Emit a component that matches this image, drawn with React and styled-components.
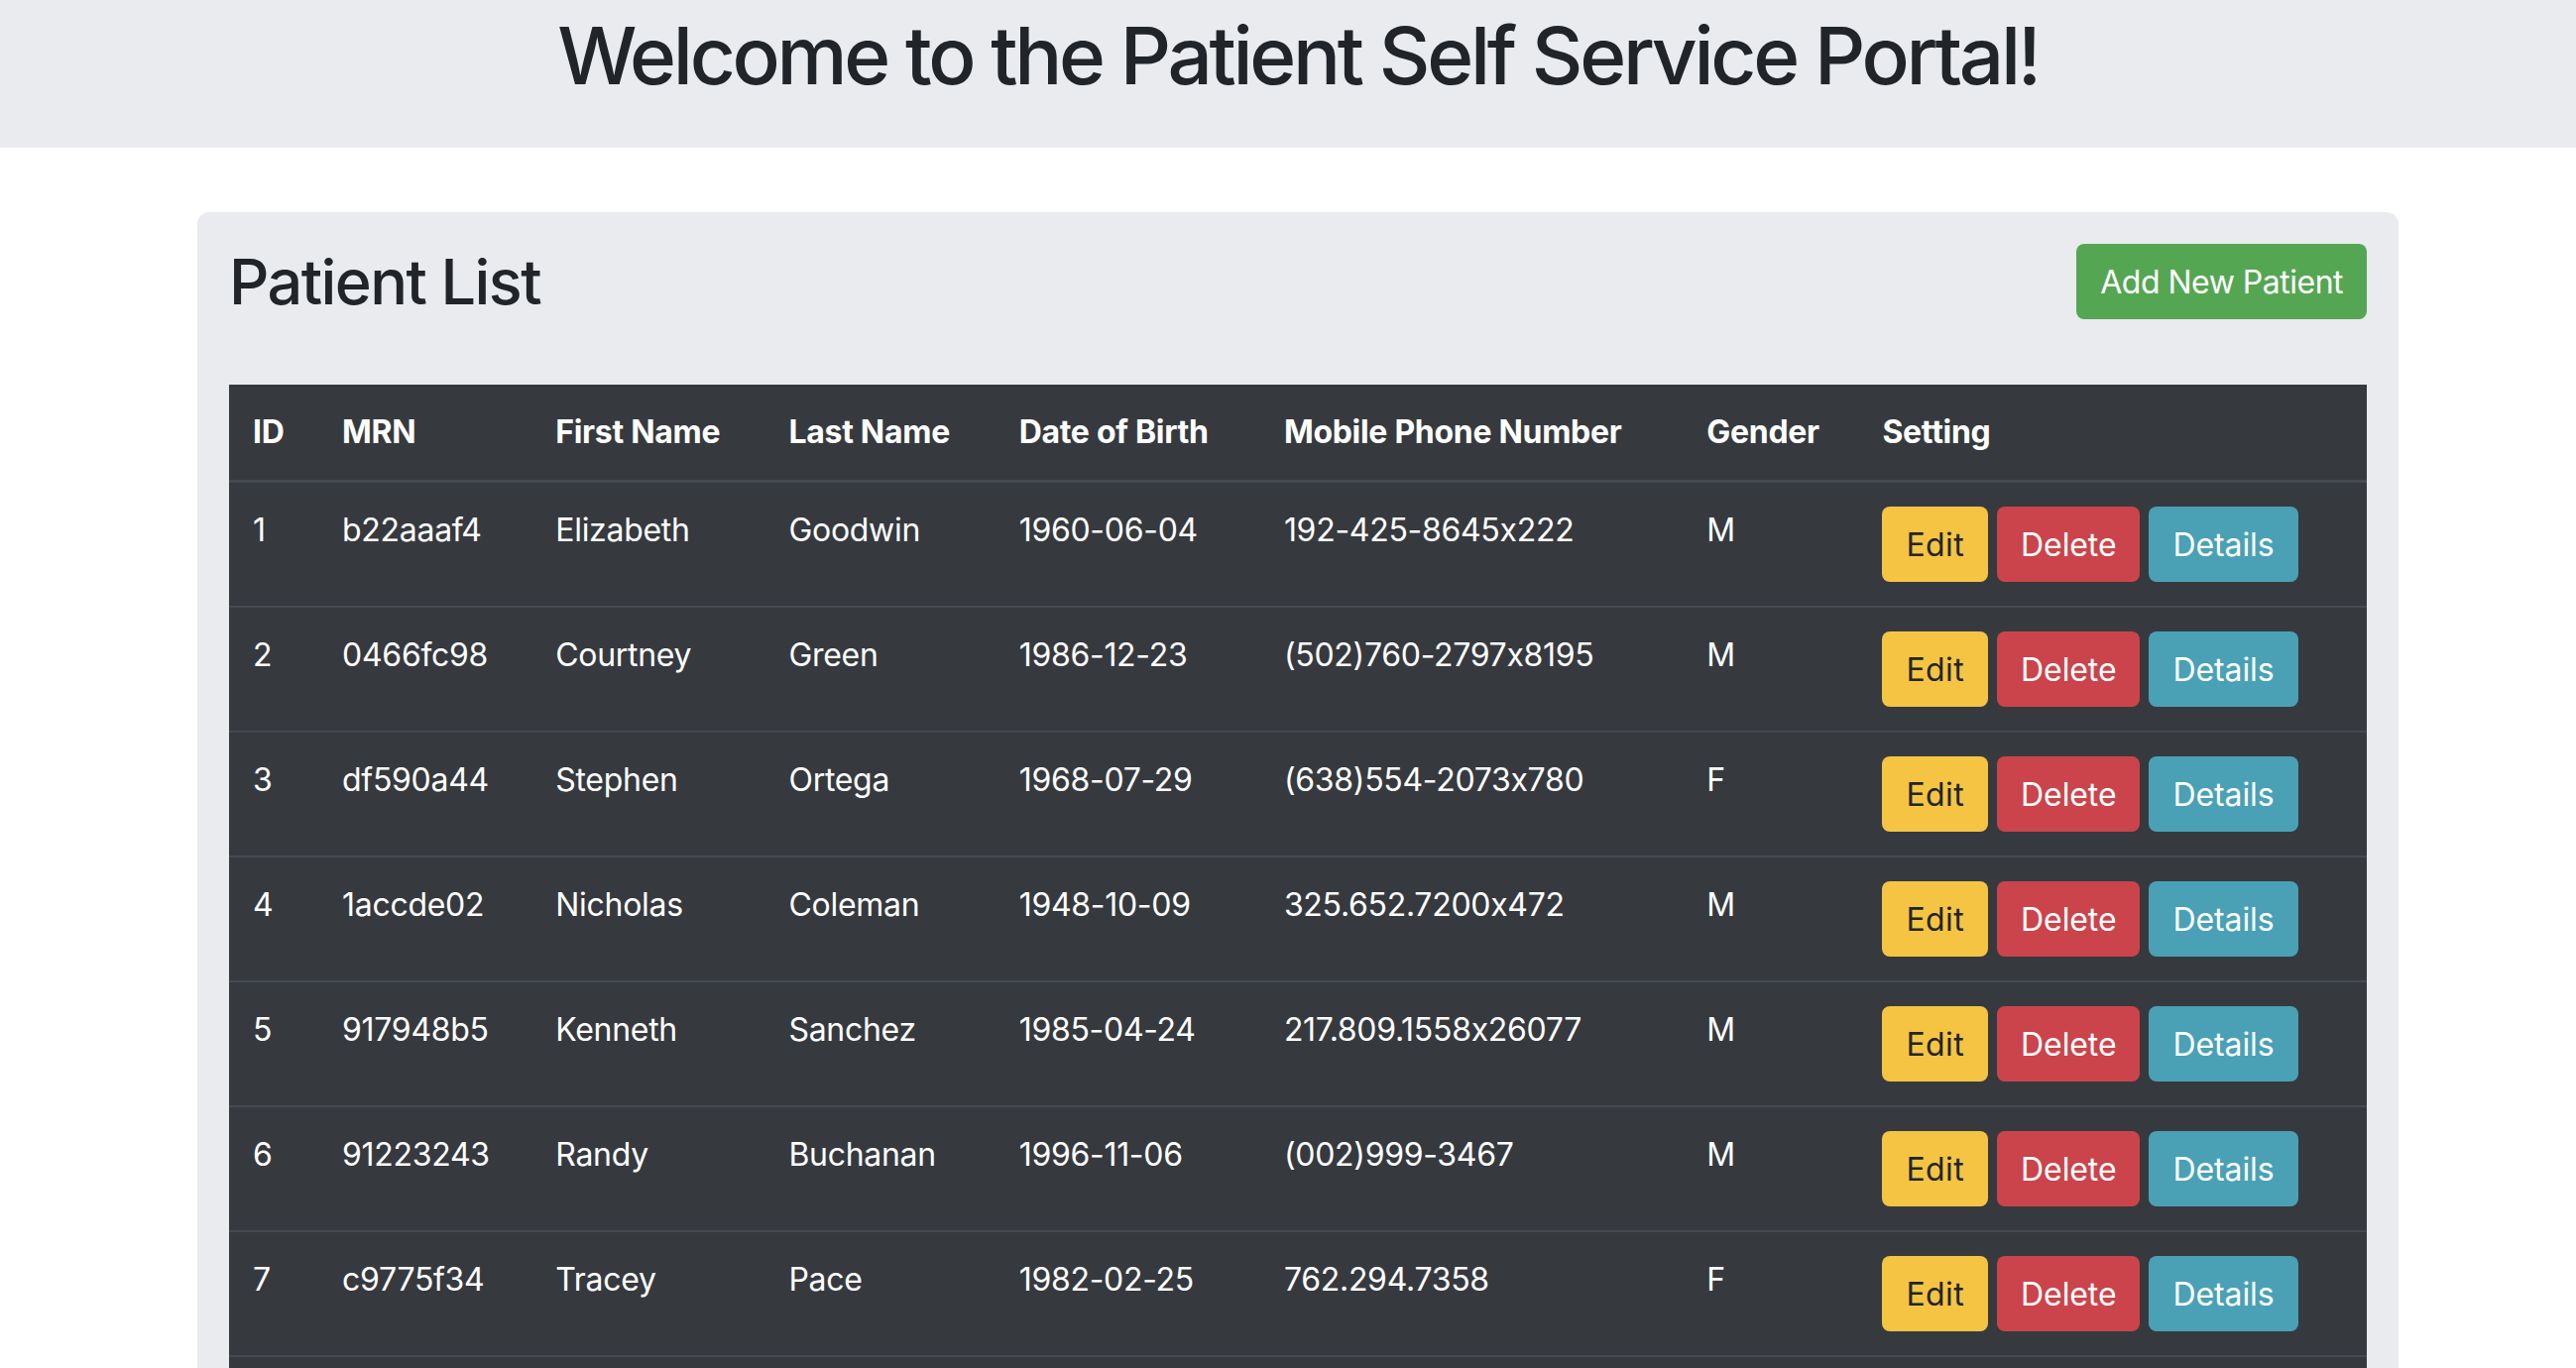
import React from 'react'
import styled, { createGlobalStyle } from 'styled-components';

const patients = [
    { id: 1, mrn: 'b22aaaf4', firstName: 'Elizabeth', lastName: 'Goodwin', dob: '1960-06-04', phone: '192-425-8645x222', gender: 'M' },
    { id: 2, mrn: '0466fc98', firstName: 'Courtney', lastName: 'Green', dob: '1986-12-23', phone: '(502)760-2797x8195', gender: 'M' },
    { id: 3, mrn: 'df590a44', firstName: 'Stephen', lastName: 'Ortega', dob: '1968-07-29', phone: '(638)554-2073x780', gender: 'F' },
    { id: 4, mrn: '1accde02', firstName: 'Nicholas', lastName: 'Coleman', dob: '1948-10-09', phone: '325.652.7200x472', gender: 'M' },
    { id: 5, mrn: '917948b5', firstName: 'Kenneth', lastName: 'Sanchez', dob: '1985-04-24', phone: '217.809.1558x26077', gender: 'M' },
    { id: 6, mrn: '91223243', firstName: 'Randy', lastName: 'Buchanan', dob: '1996-11-06', phone: '(002)999-3467', gender: 'M' },
    { id: 7, mrn: 'c9775f34', firstName: 'Tracey', lastName: 'Pace', dob: '1982-02-25', phone: '762.294.7358', gender: 'F' },
    { id: 8, mrn: '5e1b07d2', firstName: 'Amanda', lastName: 'Reyes', dob: '1973-09-14', phone: '405-318-2291', gender: 'F' },
    { id: 9, mrn: 'a83c4f10', firstName: 'Joshua', lastName: 'Hart', dob: '1991-03-02', phone: '(816)440-1975x31', gender: 'M' },
];

const columns = [
    { label: 'ID', width: 90 },
    { label: 'MRN', width: 215 },
    { label: 'First Name', width: 235 },
    { label: 'Last Name', width: 232 },
    { label: 'Date of Birth', width: 267 },
    { label: 'Mobile Phone Number', width: 426 },
    { label: 'Gender', width: 177 },
    { label: 'Setting', width: 512 },
];

const App = () => {
    return (
        <>
            <GlobalStyle />
            <Banner>
                <Inner>
                    <Title>Welcome to the Patient Self Service Portal!</Title>
                </Inner>
            </Banner>
            <Inner>
                <Card>
                    <CardHeader>
                        <h2>Patient List</h2>
                        <Button variant="success">Add New Patient</Button>
                    </CardHeader>
                    <Table>
                        <colgroup>
                            {columns.map((col) => (
                                <col key={col.label} style={{ width: col.width }} />
                            ))}
                        </colgroup>
                        <thead>
                            <tr>
                                {columns.map((col) => (
                                    <Th key={col.label}>{col.label}</Th>
                                ))}
                            </tr>
                        </thead>
                        <tbody>
                            {patients.map((p) => (
                                <tr key={p.id}>
                                    <Td>{p.id}</Td>
                                    <Td>{p.mrn}</Td>
                                    <Td>{p.firstName}</Td>
                                    <Td>{p.lastName}</Td>
                                    <Td>{p.dob}</Td>
                                    <Td>{p.phone}</Td>
                                    <Td>{p.gender}</Td>
                                    <Td>
                                        <Actions>
                                            <Button variant="warning">Edit</Button>
                                            <Button variant="danger">Delete</Button>
                                            <Button variant="info">Details</Button>
                                        </Actions>
                                    </Td>
                                </tr>
                            ))}
                        </tbody>
                    </Table>
                </Card>
            </Inner>
        </>
    )
}

export default App

const GlobalStyle = createGlobalStyle`
    body {
        margin: 0;
        background: #ffffff;
        color: #212529;
        font-family: Inter, "Noto Sans", "Liberation Sans", sans-serif;
    }
`;

const Banner = styled.header`
    background-color: #e9ebef;
    height: 149px;
    box-sizing: border-box;
    padding-top: 8px;
`;

const Inner = styled.div`
    width: 2220px;
    margin: 0 179px 0 199px;
`;

const Title = styled.h1`
    margin: 0;
    font-size: 80px;
    line-height: 96px;
    font-weight: 500;
    letter-spacing: -3.3px;
    text-align: center;
    color: #212529;
`;

const Card = styled.section`
    margin-top: 65px;
    background-color: #e9ebef;
    border-radius: 12px;
    padding: 32px 32px 0;
`;

const CardHeader = styled.div`
    display: flex;
    justify-content: space-between;
    align-items: center;
    height: 76px;
    margin-bottom: 66px;

    h2 {
        margin: 0;
        font-size: 63px;
        line-height: 76px;
        font-weight: 500;
        letter-spacing: -1.6px;
        color: #212529;
    }
`;

const buttonColors = {
    success: { bg: '#55a653', fg: '#ffffff', spacing: '-0.5px' },
    warning: { bg: '#f5c443', fg: '#212529', spacing: '0.4px' },
    danger: { bg: '#cb444b', fg: '#ffffff', spacing: '-0.1px' },
    info: { bg: '#4aa1b5', fg: '#ffffff', spacing: '-0.1px' },
};

const Button = styled.button`
    height: 76px;
    padding: 0 24px;
    border: none;
    border-radius: 8px;
    font-family: inherit;
    font-size: 32px;
    font-weight: 400;
    letter-spacing: ${({ variant }) => buttonColors[variant].spacing};
    background-color: ${({ variant }) => buttonColors[variant].bg};
    color: ${({ variant }) => buttonColors[variant].fg};
    cursor: pointer;
`;

const Table = styled.table`
    width: 100%;
    table-layout: fixed;
    border-collapse: collapse;
    background-color: #363a3f;
    color: #ffffff;
    font-size: 32px;
    line-height: 48px;
`;

const Th = styled.th`
    text-align: left;
    font-weight: 700;
    letter-spacing: -0.3px;
    padding: 24px;
    border-bottom: 3px solid #454a50;
    white-space: nowrap;
`;

const Td = styled.td`
    vertical-align: top;
    padding: 24px;
    border-top: 2px solid #454a50;
    letter-spacing: -0.3px;
    white-space: nowrap;
`;

const Actions = styled.div`
    display: flex;
    gap: 9px;
`;
